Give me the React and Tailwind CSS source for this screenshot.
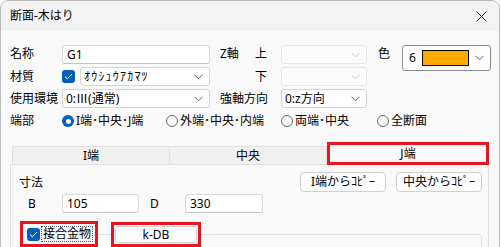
import React from 'react'

const FONT = { fontFamily: '"Noto Sans", "Noto Sans CJK JP", sans-serif' }

function Chevron({ light }) {
  return (
    <svg width="9" height="6" viewBox="0 0 9 6" className="shrink-0">
      <polyline
        points="0.5,0.8 4.5,4.8 8.5,0.8"
        fill="none"
        stroke={light ? '#c8c8c8' : '#606060'}
        strokeWidth="1"
      />
    </svg>
  )
}

function Combo({ width, value, disabled, wide }) {
  return (
    <div
      className={`flex h-[19px] items-center justify-between rounded-[3px] border pl-[3px] pr-[6px] ${
        disabled ? 'border-[#e6e6e6] bg-[#fbfbfb]' : 'border-[#d4d4d4] bg-white'
      }`}
      style={{ width }}
    >
      <span
        className={`whitespace-nowrap text-[12px] leading-[16px] text-black ${wide ? 'tracking-[1.2px]' : ''}`}
      >
        {value}
      </span>
      <Chevron light={disabled} />
    </div>
  )
}

function TextBox({ width, value }) {
  return (
    <div
      className="flex h-[19px] items-center rounded-[3px] border border-[#d9d9d9] border-b-[#c4c4c4] bg-white pl-[4px]"
      style={{ width }}
    >
      <span className="text-[12px] leading-[16px]">{value}</span>
    </div>
  )
}

function Check() {
  return (
    <div className="flex h-[13px] w-[13px] shrink-0 items-center justify-center rounded-[3px] bg-[#005fb8]">
      <svg width="9" height="7" viewBox="0 0 9 7">
        <polyline points="1,3.6 3.3,5.8 8,1" fill="none" stroke="white" strokeWidth="1" />
      </svg>
    </div>
  )
}

function Radio({ checked, label, width }) {
  return (
    <div className="flex items-center" style={{ width }}>
      {checked ? (
        <div className="flex h-[12px] w-[12px] items-center justify-center rounded-full bg-[#005fb8]">
          <div className="h-[5px] w-[5px] rounded-full bg-white" />
        </div>
      ) : (
        <div className="h-[12px] w-[12px] rounded-full border border-[#6a6a6a] bg-[#f6f6f6]" />
      )}
      <span className="ml-[2px] whitespace-nowrap text-[12px] leading-[16px]">{label}</span>
    </div>
  )
}

function Button({ label, width }) {
  return (
    <div
      className="flex h-[20px] items-center justify-center rounded-[4px] border border-[#d0d0d0] bg-[#fdfdfd]"
      style={{ width }}
    >
      <span className="whitespace-nowrap text-[12px] leading-[16px]">{label}</span>
    </div>
  )
}

export default function App() {
  return (
    <div className="h-[247px] w-[501px] overflow-hidden bg-white text-black" style={FONT}>
      <div className="h-[260px] w-[500px] overflow-hidden rounded-t-[8px] border border-[#b9b9b9] bg-[#f9f9f9]">
        {/* title bar */}
        <div className="flex h-[30px] items-center justify-between bg-[#f3f3f3] pl-[9px] pr-[12px]">
          <span className="text-[12px] leading-[16px]">断面-木はり</span>
          <svg width="11" height="11" viewBox="0 0 11 11">
            <path d="M0.5 0.5 L10.5 10.5 M10.5 0.5 L0.5 10.5" stroke="#222" strokeWidth="1" />
          </svg>
        </div>

        <div className="pl-[9px] pt-[14px]">
          {/* row 1 */}
          <div className="flex h-[19px] items-start">
            <span className="mt-[1px] w-[52px] text-[12px] leading-[16px]">名称</span>
            <TextBox width={148} value="G1" />
            <span className="ml-[10px] mt-[1px] w-[35px] text-[12px] leading-[16px]">Z軸</span>
            <span className="mt-[1px] w-[26px] text-[12px] leading-[16px]">上</span>
            <Combo width={86} value="" disabled />
            <span className="ml-[11px] mt-[1px] w-[24px] text-[12px] leading-[16px]">色</span>
            <div className="flex h-[26px] w-[89px] items-center rounded-[3px] border border-[#8c8c8c] bg-white pl-[6px] pr-[6px]">
              <span className="text-[12px] leading-[16px]">6</span>
              <div className="ml-[6px] h-[16px] w-[47px] border border-black bg-[#ffaa00]" />
              <div className="ml-auto">
                <Chevron />
              </div>
            </div>
          </div>

          {/* row 2 */}
          <div className="mt-[3px] flex h-[19px] items-center">
            <span className="w-[52px] text-[12px] leading-[16px]">材質</span>
            <Check />
            <div className="ml-[5px]">
              <Combo width={130} value="ｵｳｼｭｳｱｶﾏﾂ" wide />
            </div>
            <span className="ml-[45px] w-[26px] text-[12px] leading-[16px]">下</span>
            <Combo width={86} value="" disabled />
          </div>

          {/* row 3 */}
          <div className="mt-[3px] flex h-[19px] items-center">
            <span className="w-[52px] text-[12px] leading-[16px]">使用環境</span>
            <Combo width={148} value="0:Ⅲ(通常)" />
            <span className="ml-[10px] w-[61px] text-[12px] leading-[16px]">強軸方向</span>
            <Combo width={86} value="0:z方向" />
          </div>

          {/* row 4 */}
          <div className="mt-[4px] flex h-[18px] items-center">
            <span className="w-[52px] text-[12px] leading-[16px]">端部</span>
            <Radio checked label="I端･中央･J端" width={104} />
            <Radio label="外端･中央･内端" width={115} />
            <Radio label="両端･中央" width={96} />
            <Radio label="全断面" />
          </div>

          {/* tabs */}
          <div className="mt-[16px] flex h-[18px] pl-[2px]">
            <div className="flex w-[158px] items-center justify-center border border-b-0 border-[#e0e0e0] bg-[#f0f0f0]">
              <span className="text-[12px] leading-[16px]">I端</span>
            </div>
            <div className="flex w-[157px] items-center justify-center border border-b-0 border-l-0 border-[#e0e0e0] bg-[#f0f0f0]">
              <span className="text-[12px] leading-[16px]">中央</span>
            </div>
            <div className="-mt-[4px] flex h-[23px] w-[162px] items-center justify-center border-[3px] border-[#e8141f] bg-[#f9f9f9]">
              <span className="text-[12px] leading-[16px]">J端</span>
            </div>
          </div>

          {/* panel */}
          <div className="h-[100px] w-[479px] border border-[#e0e0e0] bg-[#f9f9f9] pl-[8px] pr-[6px] pt-[7px]">
            <div className="flex items-start justify-between">
              <span className="mt-[3px] text-[12px] leading-[16px]">寸法</span>
              <div className="flex gap-[10px]">
                <Button label="I端からｺﾋﾟｰ" width={86} />
                <Button label="中央からｺﾋﾟｰ" width={86} />
              </div>
            </div>

            <div className="mt-[2px] flex h-[19px] items-center">
              <span className="ml-[9px] w-[34px] text-[12px] leading-[16px]">B</span>
              <TextBox width={77} value="105" />
              <span className="ml-[11px] w-[35px] text-[12px] leading-[16px]">D</span>
              <TextBox width={78} value="330" />
            </div>

            {/* group box */}
            <div className="relative mt-[8px] h-[40px] w-[463px]">
              <div className="absolute left-[4px] right-0 top-[13px] h-[30px] rounded-[3px] border border-[#e0e0e0]" />
              <div className="absolute left-[1px] top-[0px] flex h-[26px] w-[78px] items-center border-[3px] border-[#e8141f] bg-[#f9f9f9] pl-[4px]">
                <Check />
                <span className="ml-[1px] border border-dotted border-[#555] px-[1px] text-[12px] leading-[14px]">
                  接合金物
                </span>
              </div>
              <div className="absolute left-[92px] top-[1px] flex h-[25px] w-[90px] items-center justify-center border-[3px] border-[#e8141f] bg-[#f9f9f9] p-[1px]">
                <div className="flex h-full w-full items-center justify-center rounded-[3px] border border-[#d0d0d0] bg-[#fdfdfd]">
                  <span className="text-[12px] leading-[16px]">k-DB</span>
                </div>
              </div>
            </div>
          </div>
        </div>
      </div>
    </div>
  )
}
